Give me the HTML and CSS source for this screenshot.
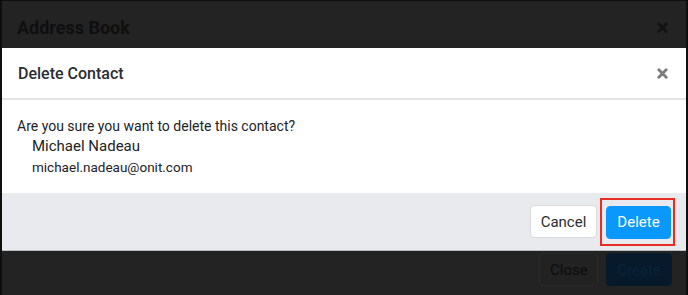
FILE: index.html
```html
<!DOCTYPE html>
<html>
<head>
<meta charset="utf-8">
<link rel="stylesheet" href="styles.css">
</head>
<body>
<div class="screen">
  <div class="under">
    <div class="under-header">
      <h1 class="under-title">Address Book</h1>
      <svg class="xicon under-x" viewBox="0 0 12 12" width="11" height="11"><path d="M2 2 L10 10 M10 2 L2 10"/></svg>
    </div>
    <div class="under-body"></div>
    <div class="under-footer">
      <button class="ubtn ubtn-close">Close</button>
      <button class="ubtn ubtn-create">Create</button>
    </div>
  </div>

  <div class="dialog">
    <div class="dlg-header">
      <h2 class="dlg-title">Delete Contact</h2>
      <svg class="xicon dlg-x" viewBox="0 0 12 12" width="11" height="11"><path d="M2 2 L10 10 M10 2 L2 10"/></svg>
    </div>
    <div class="dlg-body">
      <p class="question">Are you sure you want to delete this contact?</p>
      <div class="contact">
        <div class="name">Michael Nadeau</div>
        <div class="email">michael.nadeau@onit.com</div>
      </div>
    </div>
    <div class="dlg-footer">
      <button class="btn btn-cancel">Cancel</button>
      <span class="highlight"><button class="btn btn-delete">Delete</button></span>
    </div>
  </div>
</div>
</body>
</html>
```

FILE: styles.css
```css
* { box-sizing: border-box; }
html, body { margin: 0; padding: 0; }
body {
  width: 688px;
  height: 295px;
  background: #0e0e0e;
  font-family: "Roboto", "Liberation Sans", sans-serif;
  overflow: hidden;
}
.screen {
  position: relative;
  width: 688px;
  height: 295px;
  padding: 1px 2px 0;
}
.under {
  height: 294px;
  background: #232323;
  display: flex;
  flex-direction: column;
}
.under-header {
  height: 52px;
  display: flex;
  align-items: center;
  justify-content: space-between;
  padding: 0 18px 0 15px;
}
.under-title {
  margin: 0;
  font-size: 18px;
  font-weight: 700;
  color: #0f0f0f;
}
.xicon {
  fill: none;
  stroke-width: 3.2;
  stroke-linecap: round;
}
.under-x { stroke: #121212; }
.under-body { flex: 1; }
.under-footer {
  display: flex;
  justify-content: flex-end;
  gap: 8px;
  padding: 0 14px 9px;
}
.ubtn {
  font-family: inherit;
  font-size: 15px;
  height: 33px;
  border-radius: 4px;
  padding: 0 10px;
  color: #0c0c0c;
}
.ubtn-close {
  background: #222;
  border: 1px solid #2a2a2a;
  width: 59px;
}
.ubtn-create {
  background: #071a2c;
  border: 1px solid #071a2c;
  color: #0b2338;
  width: 66px;
}

.dialog {
  position: absolute;
  top: 48px;
  left: 2px;
  width: 684px;
  background: #fff;
  border-bottom: 1px solid #b9bbbf;
}
.dlg-header {
  height: 52px;
  display: flex;
  align-items: center;
  justify-content: space-between;
  padding: 0 18px 0 16px;
  border-bottom: 2px solid #e2e3e5;
}
.dlg-title {
  margin: 0;
  font-size: 16px;
  font-weight: 500;
  color: #2b2d30;
}
.dlg-x { stroke: #7b7d81; }
.dlg-body {
  padding: 16px 15px 15px;
  color: #212326;
}
.question {
  margin: 0;
  font-size: 14px;
  line-height: 20px;
}
.contact { padding-left: 15px; }
.name {
  font-size: 15px;
  line-height: 21px;
}
.email {
  font-size: 13.5px;
  line-height: 21px;
}
.dlg-footer {
  background: #e9eaee;
  height: 57px;
  display: flex;
  align-items: center;
  justify-content: flex-end;
  gap: 3px;
  padding: 0 11px 0 0;
}
.btn {
  font-family: inherit;
  font-size: 15px;
  height: 33px;
  border-radius: 4px;
  cursor: pointer;
}
.btn-cancel {
  background: #fff;
  border: 1px solid #d9dadd;
  color: #2b2d30;
  width: 67px;
}
.highlight {
  display: inline-flex;
  border: 2px solid #ea2d22;
  padding: 6px 2px 5px 4px;
}
.btn-delete {
  background: #0b98fd;
  border: 1px solid #0b98fd;
  color: #fff;
  width: 65px;
}
```
